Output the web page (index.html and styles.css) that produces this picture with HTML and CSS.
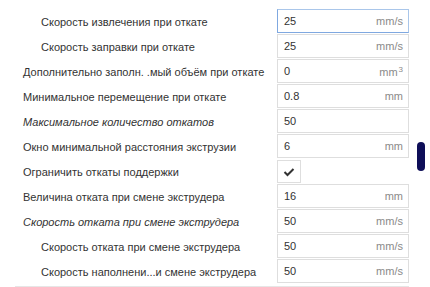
FILE: index.html
```html
<!DOCTYPE html>
<html>
  <head>
    <title>Retraction settings</title>
    <link rel="stylesheet" href="styles.css">
    <meta name="viewport" content="width=device-width, initial-scale=1.0" />
  </head>
  <body>
    <div id="settings">
      <div class="row">
        <span class="label sub">Скорость извлечения при откате</span>
        <div class="field focused"><span class="value">25</span><span class="unit">mm/s</span></div>
      </div>
      <div class="row">
        <span class="label sub">Скорость заправки при откате</span>
        <div class="field"><span class="value">25</span><span class="unit">mm/s</span></div>
      </div>
      <div class="row">
        <span class="label">Дополнительно заполн. .мый объём при откате</span>
        <div class="field"><span class="value">0</span><span class="unit">mm<sup>3</sup></span></div>
      </div>
      <div class="row">
        <span class="label">Минимальное перемещение при откате</span>
        <div class="field"><span class="value">0.8</span><span class="unit">mm</span></div>
      </div>
      <div class="row">
        <span class="label italic">Максимальное количество откатов</span>
        <div class="field"><span class="value">50</span><span class="unit"></span></div>
      </div>
      <div class="row">
        <span class="label">Окно минимальной расстояния экструзии</span>
        <div class="field"><span class="value">6</span><span class="unit">mm</span></div>
      </div>
      <div class="row">
        <span class="label">Ограничить откаты поддержки</span>
        <div class="check">
          <svg width="12" height="10" viewBox="0 0 12 10"><polyline points="1.5,5 4.5,8 10.5,2" fill="none" stroke="#333" stroke-width="2"/></svg>
        </div>
      </div>
      <div class="row">
        <span class="label">Величина отката при смене экструдера</span>
        <div class="field"><span class="value">16</span><span class="unit">mm</span></div>
      </div>
      <div class="row">
        <span class="label italic">Скорость отката при смене экструдера</span>
        <div class="field"><span class="value">50</span><span class="unit">mm/s</span></div>
      </div>
      <div class="row">
        <span class="label sub">Скорость отката при смене экструдера</span>
        <div class="field"><span class="value">50</span><span class="unit">mm/s</span></div>
      </div>
      <div class="row">
        <span class="label sub">Скорость наполнени...и смене экструдера</span>
        <div class="field"><span class="value">50</span><span class="unit">mm/s</span></div>
      </div>
      <div class="divider"></div>
    </div>
    <div id="scroll_thumb"></div>
  </body>
</html>
```
FILE: styles.css
```css
body {
  margin: 0;
  background: #ffffff;
  font-family: "Liberation Sans", Arial, sans-serif;
  font-size: 11px;
  color: #333333;
}
#settings {
  padding-top: 9px;
  width: 409px;
}
.row {
  display: grid;
  grid-template-columns: 1fr 132px;
  column-gap: 12px;
  align-items: center;
  height: 25px;
}
.label {
  padding-left: 23px;
  white-space: nowrap;
}
.label.sub {
  padding-left: 41px;
}
.label.italic {
  font-style: italic;
}
.field {
  box-sizing: border-box;
  height: 24px;
  border: 1px solid #dedede;
  display: flex;
  align-items: center;
  justify-content: space-between;
  padding: 0 5px 0 6px;
  align-self: start;
}
.field.focused {
  border-color: #a9c6ea;
  border-left-color: #7fa8e0;
  border-bottom-color: #7fa8e0;
}
.value {
  color: #333333;
}
.unit {
  color: #8a8a8a;
}
.unit sup {
  font-size: 8px;
  vertical-align: 4px;
  margin-left: 1px;
}
.check {
  box-sizing: border-box;
  width: 24px;
  height: 23px;
  border: 1px solid #dedede;
  display: flex;
  align-items: center;
  justify-content: center;
}
.divider {
  margin: 2px 0 0 15px;
  border-top: 1px solid #e6e6e6;
}
#scroll_thumb {
  position: absolute;
  left: 417px;
  top: 142px;
  width: 8px;
  height: 29px;
  border-radius: 4px;
  background: #0e0e58;
}
```
